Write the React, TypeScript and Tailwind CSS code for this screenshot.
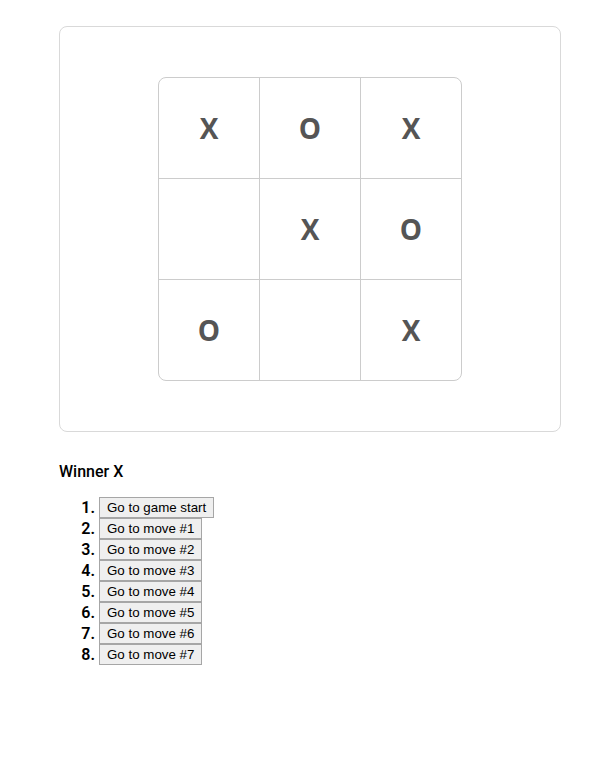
import React from "react";

const board = ["X", "O", "X", "", "X", "O", "O", "", "X"];
const moves = [
  "Go to game start",
  "Go to move #1",
  "Go to move #2",
  "Go to move #3",
  "Go to move #4",
  "Go to move #5",
  "Go to move #6",
  "Go to move #7",
];

export default function App() {
  return (
    <div className="min-h-[772px] bg-white px-[59px] pt-[26px] font-['Roboto',sans-serif] text-black">
      <div className="flex h-[406px] w-[502px] items-center justify-center rounded-lg border border-[#d9d9d9]">
        <div className="grid grid-cols-[101px_101px_100px] grid-rows-[101px_101px_100px] overflow-hidden rounded-lg border border-[#cccccc]">
          {board.map((v, i) => (
            <div
              key={i}
              className={`flex items-center justify-center border-[#cccccc] font-['Open_Sans',sans-serif] text-[28px] font-bold text-[#555555] ${
                i % 3 !== 2 ? "border-r" : ""
              } ${i < 6 ? "border-b" : ""}`}
            >
              {v}
            </div>
          ))}
        </div>
      </div>
      <div className="mt-[28px] text-[16px] font-medium leading-6">Winner X</div>
      <ol className="mt-[13px] pl-[40px]">
        {moves.map((m, i) => (
          <li key={i} className="flex h-[21px] items-center">
            <span className="-ml-[36px] w-[36px] pr-[4px] text-right text-[16px] font-semibold">{i + 1}.</span>
            <button className="h-[21px] border border-[#a6a6a6] bg-[#efefef] px-[7px] font-['Liberation_Sans',Arial,sans-serif] text-[13.33px] leading-[15px] text-black">
              {m}
            </button>
          </li>
        ))}
      </ol>
    </div>
  );
}
